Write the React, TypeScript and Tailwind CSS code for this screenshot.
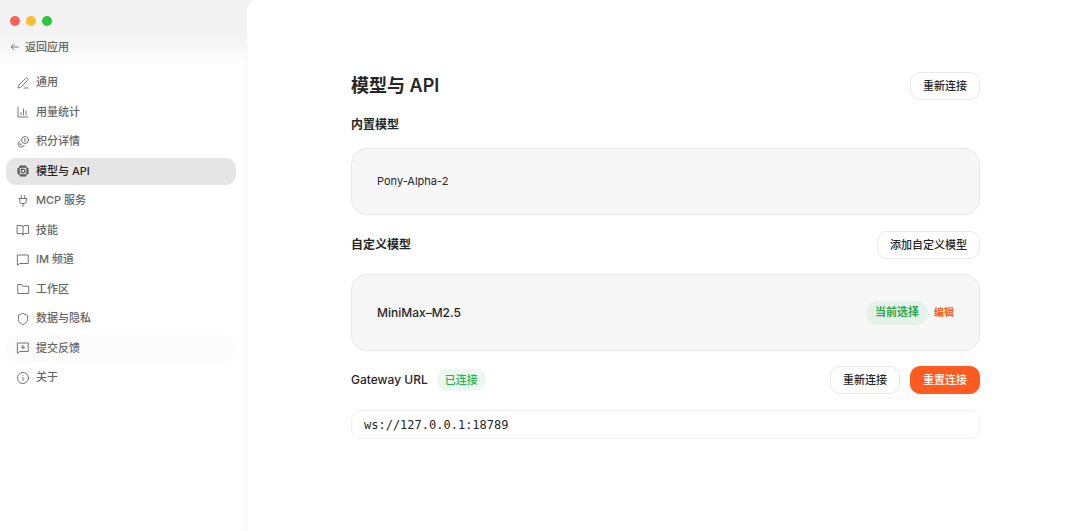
import type { ReactNode } from 'react'

type NavId =
  | 'general'
  | 'usage'
  | 'credits'
  | 'models'
  | 'mcp'
  | 'skills'
  | 'im'
  | 'workspace'
  | 'privacy'
  | 'feedback'
  | 'about'

interface NavItem {
  id: NavId
  label: string
  icon: ReactNode
}

const NAV_ITEMS: NavItem[] = [
  {
    id: 'general',
    label: '通用',
    icon: (
      <>
        <path d="M14 22h8" />
        <path d="M21.2 6.8a2.8 2.8 0 0 0-4-4L3.8 16.2a2 2 0 0 0-.5.8L2 21.4a.5.5 0 0 0 .6.6L7 20.7a2 2 0 0 0 .8-.5z" />
      </>
    ),
  },
  {
    id: 'usage',
    label: '用量统计',
    icon: (
      <>
        <path d="M2 2v20h20" />
        <path d="M8 18v-5" />
        <path d="M13 18V6" />
        <path d="M18 18v-8" />
      </>
    ),
  },
  {
    id: 'credits',
    label: '积分详情',
    icon: (
      <>
        <circle cx="16" cy="8" r="7" />
        <path d="M14.5 6H16v5" />
        <path d="M5.5 10a6.5 6.5 0 1 0 9 8.5" />
        <path d="M6 14.5v3h2.5" />
      </>
    ),
  },
  {
    id: 'models',
    label: '模型与 API',
    icon: (
      <>
        <rect x="4" y="4" width="16" height="16" rx="2" />
        <rect x="8.5" y="8.5" width="7" height="7" rx="1" />
        <path d="M8 1V4M12 1V4M16 1V4M8 20v3M12 20v3M16 20v3M1 8H4M1 12H4M1 16H4M20 8h3M20 12h3M20 16h3" />
      </>
    ),
  },
  {
    id: 'mcp',
    label: 'MCP 服务',
    icon: (
      <>
        <path d="M12 23v-6" />
        <path d="M8.5 7V1" />
        <path d="M15.5 7V1" />
        <path d="M4 7h16M18.5 7v6a4 4 0 0 1-4 4h-5a4 4 0 0 1-4-4V7" />
      </>
    ),
  },
  {
    id: 'skills',
    label: '技能',
    icon: (
      <>
        <path d="M12 6v16" />
        <path d="M1 3h7a4 4 0 0 1 4 3 4 4 0 0 1 4-3h7v16h-8a3 3 0 0 0-3 3 3 3 0 0 0-3-3H1z" />
      </>
    ),
  },
  {
    id: 'im',
    label: 'IM 频道',
    icon: <path d="M1.5 2h21v17H5.5l-4 3z" />,
  },
  {
    id: 'workspace',
    label: '工作区',
    icon: <path d="M22.5 21h-21V3H9l3 3.5h10.5z" />,
  },
  {
    id: 'privacy',
    label: '数据与隐私',
    icon: <path d="M12 1l9 4v8c0 5-4 8-9 10-5-2-9-5-9-10V5z" />,
  },
  {
    id: 'feedback',
    label: '提交反馈',
    icon: (
      <>
        <path d="M1.5 2h21v17H5.5l-4 3z" />
        <path d="M12 7v7M8.5 10.5h7" />
      </>
    ),
  },
  {
    id: 'about',
    label: '关于',
    icon: (
      <>
        <circle cx="12" cy="12" r="11" />
        <path d="M12 17v-6M12 7h.01" />
      </>
    ),
  },
]

const NAV_STATES: Partial<Record<NavId, string>> = {
  models: 'bg-[#e5e5e5] text-[#262626]',
  feedback: 'bg-[#fcfcfc] text-[#666666]',
}

const BUTTON_VARIANTS = {
  outline: 'border-[#e8e8e8] bg-white text-[#262626]',
  primary: 'border-[#ff5a1f] bg-[#ff5a1f] text-white',
}

function Icon({ children }: { children: ReactNode }) {
  return (
    <svg
      viewBox="0 0 24 24"
      className="size-3 shrink-0 overflow-visible"
      fill="none"
      stroke="currentColor"
      strokeWidth={1.8}
      strokeLinecap="round"
      strokeLinejoin="round"
      aria-hidden="true"
    >
      {children}
    </svg>
  )
}

function Button({ variant = 'outline', children }: { variant?: keyof typeof BUTTON_VARIANTS; children: ReactNode }) {
  return (
    <button type="button" className={`h-7 rounded-[10px] border px-3 text-[11px] font-medium ${BUTTON_VARIANTS[variant]}`}>
      {children}
    </button>
  )
}

function Sidebar() {
  return (
    <aside className="w-[247px] shrink-0 border-r border-[#f4f4f4] bg-linear-to-b from-[#f3f3f3] from-[36px] to-white to-[68px] text-[11px] font-medium text-[#666666]">
      <div className="flex gap-1.5 px-2.5 pt-4">
        <span className="size-2.5 rounded-full bg-[#ff5f57]" />
        <span className="size-2.5 rounded-full bg-[#febc2e]" />
        <span className="size-2.5 rounded-full bg-[#28c840]" />
      </div>
      <button type="button" className="mt-[13px] flex h-4 items-center gap-[5px] pl-2.5">
        <svg
          viewBox="0 0 24 24"
          className="size-2.5"
          fill="none"
          stroke="currentColor"
          strokeWidth={2}
          strokeLinecap="round"
          strokeLinejoin="round"
          aria-hidden="true"
        >
          <path d="M20 12H3M10 5l-7 7 7 7" />
        </svg>
        返回应用
      </button>
      <nav className="mt-3.5 mr-2.5 ml-1.5 flex h-[322px] flex-col justify-between">
        {NAV_ITEMS.map((item) => (
          <button
            key={item.id}
            type="button"
            aria-current={item.id === 'models' ? 'page' : undefined}
            className={`flex h-[27px] items-center gap-[7px] rounded-[10px] px-[11px] ${NAV_STATES[item.id] ?? ''}`}
          >
            <Icon>{item.icon}</Icon>
            {item.label}
          </button>
        ))}
      </nav>
    </aside>
  )
}

export default function App() {
  return (
    <div className="flex min-h-screen bg-[#f3f3f3] font-['Inter','Noto_Sans_CJK_SC',sans-serif] text-[#262626]">
      <Sidebar />
      <main className="flex-1 rounded-tl-[10px] bg-white pt-[72px] pr-[100px] pb-16 pl-[104px] text-xs">
        <div className="flex items-center justify-between">
          <h1 className="text-lg font-semibold">模型与 API</h1>
          <Button>重新连接</Button>
        </div>

        <h2 className="mt-[17px] font-semibold">内置模型</h2>
        <div className="mt-[15px] flex h-[67px] items-center rounded-2xl border border-[#e8e8e8] bg-[#f7f7f7] px-[25px] text-[11px]">
          Pony-Alpha-2
        </div>

        <div className="mt-4 flex items-center justify-between">
          <h2 className="font-semibold">自定义模型</h2>
          <Button>添加自定义模型</Button>
        </div>
        <div className="mt-[15px] flex h-[77px] items-center rounded-2xl border border-[#e8e8e8] bg-[#f7f7f7] px-[25px]">
          <span className="font-medium">MiniMax–M2.5</span>
          <span className="ml-auto flex h-6 items-center rounded-full bg-[#e6f2e9] px-[9px] text-[11px] font-semibold text-[#2fa84f]">
            当前选择
          </span>
          <button type="button" className="ml-1.5 text-[10px] font-semibold text-[#ff5a1f]">
            编辑
          </button>
        </div>

        <div className="mt-[15px] flex items-center">
          <label htmlFor="gateway" className="font-medium">
            Gateway URL
          </label>
          <span className="ml-[9px] flex h-[22px] items-center rounded-full bg-[#ebf8ef] px-2 text-[11px] font-medium text-[#22b455]">
            已连接
          </span>
          <div className="ml-auto flex gap-2.5">
            <Button>重新连接</Button>
            <Button variant="primary">重置连接</Button>
          </div>
        </div>
        <input
          id="gateway"
          defaultValue="ws://127.0.0.1:18789"
          className="mt-4 h-[29px] w-full rounded-[10px] border border-[#f0f0f0] bg-white px-3 font-['DejaVu_Sans_Mono',monospace] text-xs outline-none"
        />
      </main>
    </div>
  )
}
